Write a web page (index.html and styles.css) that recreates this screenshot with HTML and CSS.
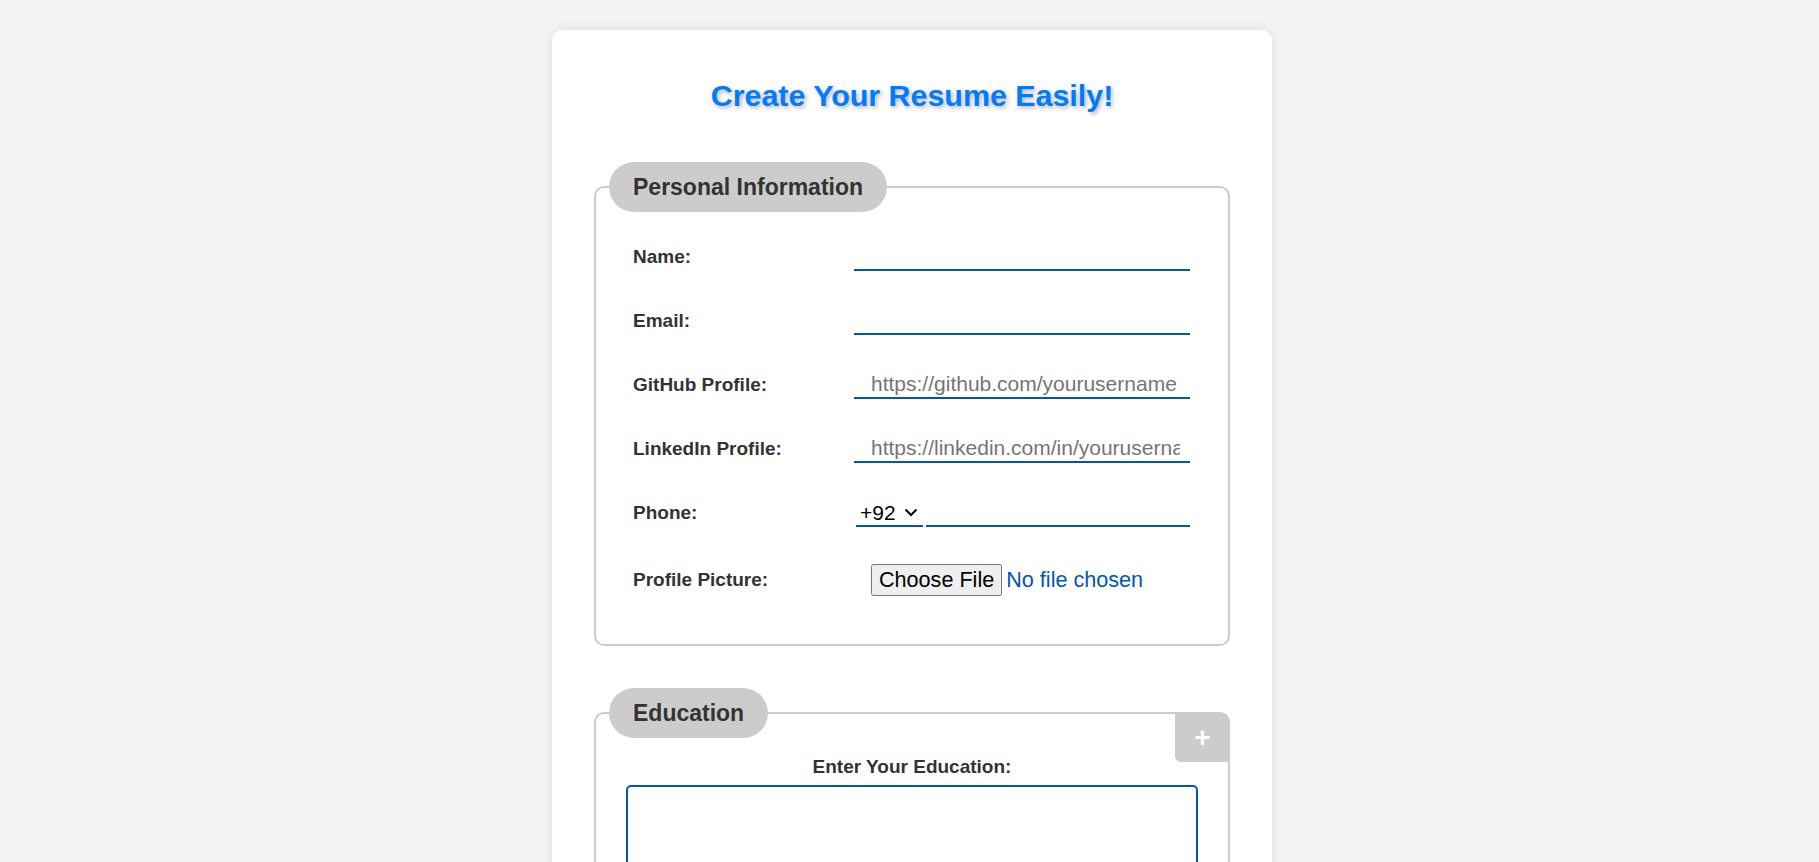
FILE: index.html
```html
<!DOCTYPE html>
<html lang="en">
<head>
    <meta charset="UTF-8">
    <meta name="viewport" content="width=device-width, initial-scale=1.0">
    <title>Resume Builder</title>
    <link rel="stylesheet" href="styles.css">
</head>
<body>
    <div class="container">
        <h1>Create Your Resume Easily!</h1>

        <form id="resume-form">
            <fieldset class="section">
                <legend>Personal Information</legend>
                <div class="form-row">
                    <label for="name">Name:</label>
                    <input type="text" id="name">
                </div>
                <div class="form-row">
                    <label for="email">Email:</label>
                    <input type="email" id="email">
                </div>
                <div class="form-row">
                    <label for="github">GitHub Profile:</label>
                    <input type="url" id="github" placeholder="https://github.com/yourusername">
                </div>
                <div class="form-row">
                    <label for="linkedin">LinkedIn Profile:</label>
                    <input type="url" id="linkedin" placeholder="https://linkedin.com/in/yourusername">
                </div>
                <div class="form-row">
                    <label for="phone">Phone:</label>
                    <div class="phone-group">
                        <select id="country-code">
                            <option>+92</option>
                            <option>+1</option>
                            <option>+44</option>
                        </select>
                        <input type="tel" id="phone">
                    </div>
                </div>
                <div class="form-row">
                    <label for="picture">Profile Picture:</label>
                    <input type="file" id="picture" class="file-input">
                </div>
            </fieldset>

            <fieldset class="section education">
                <legend>Education</legend>
                <button type="button" class="add-btn">+</button>
                <label for="education" class="center-label">Enter Your Education:</label>
                <textarea id="education" rows="6"></textarea>
            </fieldset>
        </form>
    </div>
</body>
</html>
```

FILE: styles.css
```css
body {
    font-family: Arial, "Liberation Sans", sans-serif;
    margin: 0;
    padding: 0 0 0 5px;
    background-color: #f4f4f4;
}
.container {
    width: 640px;
    margin: 30px auto;
    background: #fff;
    padding: 47px 40px 40px;
    border-radius: 10px;
    box-shadow: 0 0 12px rgba(0, 0, 0, 0.1);
}
h1 {
    margin: 0 0 49px;
    font-size: 30.4px;
    line-height: 36px;
    text-align: center;
    color: #007BFF;
    text-shadow: 2px 2px 4px rgba(0, 0, 0, 0.3);
}
.section {
    margin: 0 2px 42px;
    padding: 31px 38px 47px 37px;
    border: 2px solid #ccc;
    border-radius: 10px;
}
.section legend {
    margin-left: -24px;
    padding: 12px 24px;
    background-color: #ccc;
    color: #333;
    font-size: 23px;
    font-weight: bold;
    line-height: 26px;
    border-radius: 25px;
}
.form-row {
    display: grid;
    grid-template-columns: 221px 1fr;
    align-items: center;
    margin-bottom: 36px;
}
.form-row:last-child {
    margin-bottom: 0;
}
label {
    color: #333;
    font-size: 19px;
    font-weight: bold;
}
input, select {
    font-family: Arial, "Liberation Sans", sans-serif;
    font-size: 21px;
}
.form-row input {
    box-sizing: border-box;
    width: 100%;
    height: 28px;
    padding: 1px 10px 1px 17px;
    border: none;
    border-bottom: 2px solid #0056b3;
    background: transparent;
    outline: none;
}
.phone-group {
    display: flex;
    gap: 3px;
    padding-left: 2px;
}
.phone-group select {
    appearance: none;
    -webkit-appearance: none;
    width: 67px;
    height: 28px;
    padding: 0 0 0 4px;
    border: none;
    border-radius: 0;
    border-bottom: 2px solid #0056b3;
    background: transparent url("data:image/svg+xml,%3Csvg xmlns='http://www.w3.org/2000/svg' width='14' height='9' viewBox='0 0 14 9'%3E%3Cpath d='M1.5 1.5l5.5 5.5 5.5-5.5' fill='none' stroke='%23000' stroke-width='2'/%3E%3C/svg%3E") no-repeat right 5px center;
    color: #000;
}
.phone-group input {
    flex: 1;
    padding: 1px 8px;
}
.form-row .file-input {
    height: auto;
    border: none;
    color: #0056b3;
    font-size: 21.6px;
}
.education {
    position: relative;
    padding: 18px 30px 30px;
}
.education legend {
    margin-left: -17px;
}
.add-btn {
    position: absolute;
    top: -25px;
    right: -2px;
    width: 55px;
    height: 49px;
    border: none;
    border-radius: 0 10px 0 6px;
    background-color: #ccc;
    color: #fff;
    font-family: Arial, "Liberation Sans", sans-serif;
    font-size: 28px;
    font-weight: bold;
    cursor: pointer;
}
.center-label {
    display: block;
    text-align: center;
    margin-bottom: 7px;
}
textarea {
    display: block;
    box-sizing: border-box;
    width: 100%;
    height: 160px;
    border: 2px solid #0056b3;
    border-radius: 5px;
    font-family: Arial, "Liberation Sans", sans-serif;
    font-size: 18px;
    resize: vertical;
}
```
